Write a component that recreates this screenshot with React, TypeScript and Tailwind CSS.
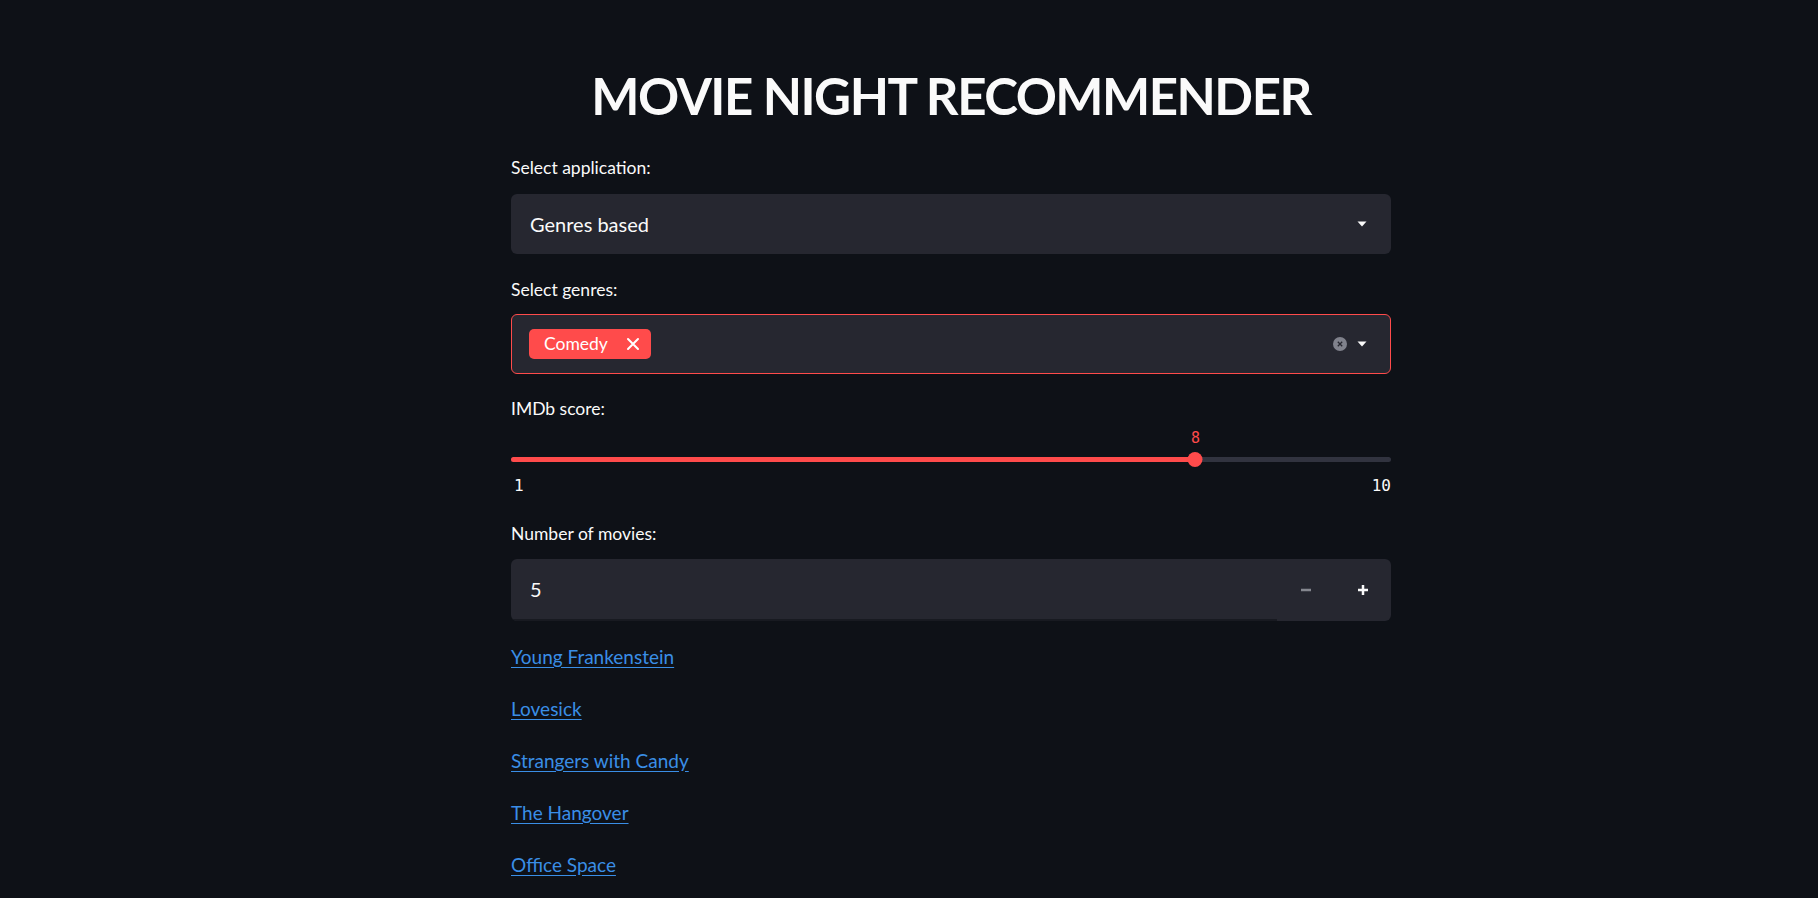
import React from 'react';

const movies = ['Young Frankenstein', 'Lovesick', 'Strangers with Candy', 'The Hangover', 'Office Space'];

const Caret = () => (
  <svg width="10" height="6" viewBox="0 0 10 6" className="shrink-0">
    <path d="M0.5 0.5 L9.5 0.5 L5 5.5 Z" fill="#fafafa" />
  </svg>
);

const Label = ({ children, className = '' }: { children: React.ReactNode; className?: string }) => (
  <div className={`h-[24px] flex items-center text-[17.5px] text-[#fafafa] ${className}`}>{children}</div>
);

export default function App() {
  const score = 8;
  const pct = ((score - 1) / 9) * 100;

  return (
    <div className="min-h-[898px] bg-[#0e1117] text-[#fafafa] font-['Lato','Noto_Sans',sans-serif]">
      <div className="ml-[511px] w-[880px] pt-[56px] flex flex-col">
        {/* title */}
        <h1 className="h-[80px] flex items-center justify-center text-[51px] font-bold tracking-[-1.5px]">
          MOVIE NIGHT RECOMMENDER
        </h1>

        {/* select application */}
        <Label className="mt-[20px]">Select application:</Label>
        <div className="mt-[14px] h-[60px] rounded-[6px] bg-[#262730] flex items-center pl-[19px] pr-[24px]">
          <span className="flex-1 text-[20px]">Genres based</span>
          <Caret />
        </div>

        {/* genres multiselect */}
        <Label className="mt-[24px]">Select genres:</Label>
        <div className="mt-[12px] h-[60px] rounded-[6px] bg-[#262730] border-[1.5px] border-[#ff4b4b] flex items-center pl-[17px] pr-[23px]">
          <div className="flex-1 flex items-center">
            <span className="h-[30px] rounded-[5px] bg-[#ff4b4b] flex items-center pl-[15px] pr-[11px] gap-[18px] text-[17.5px] text-white">
              Comedy
              <svg width="14" height="14" viewBox="0 0 14 14">
                <path d="M2 2 L12 12 M12 2 L2 12" stroke="#fff" strokeWidth="2" strokeLinecap="round" />
              </svg>
            </span>
          </div>
          <svg width="14" height="14" viewBox="0 0 14 14" className="mr-[10px]">
            <circle cx="7" cy="7" r="7" fill="#80828c" />
            <path d="M4.8 4.8 L9.2 9.2 M9.2 4.8 L4.8 9.2" stroke="#262730" strokeWidth="1.3" />
          </svg>
          <Caret />
        </div>

        {/* imdb slider */}
        <Label className="mt-[23px]">IMDb score:</Label>
        <div className="relative mt-[7px] h-[20px] font-['DejaVu_Sans_Mono',monospace] text-[15px] text-[#ff4b4b]">
          <span className="absolute -translate-x-1/2 leading-[20px]" style={{ left: `${pct}%` }}>
            {score}
          </span>
        </div>
        <div className="relative mt-[4px] h-[14px] flex items-center">
          <div className="w-full h-[5px] rounded-full bg-[#31333f]" />
          <div className="absolute left-0 h-[5px] rounded-full bg-[#ff4b4b]" style={{ width: `${pct}%` }} />
          <div
            className="absolute w-[15px] h-[15px] rounded-full bg-[#ff4b4b] -translate-x-1/2"
            style={{ left: `${pct}%` }}
          />
        </div>
        <div className="mt-[10px] h-[20px] flex justify-between items-center font-['DejaVu_Sans_Mono',monospace] text-[16px] text-[#fafafa]">
          <span className="pl-[3px]">1</span>
          <span>10</span>
        </div>

        {/* number of movies */}
        <Label className="mt-[26px]">Number of movies:</Label>
        <div className="mt-[13px] h-[62px] rounded-[6px] bg-[#262730] flex overflow-hidden">
          <div className="flex-1 flex items-center pl-[19px] text-[20px] border-b-[2px] border-[#181a21]">5</div>
          <button className="w-[57px] flex items-center justify-center">
            <svg width="12" height="12" viewBox="0 0 12 12">
              <path d="M1 6 H11" stroke="#85878f" strokeWidth="2.5" />
            </svg>
          </button>
          <button className="w-[57px] flex items-center justify-center">
            <svg width="12" height="12" viewBox="0 0 12 12">
              <path d="M1 6 H11 M6 1 V11" stroke="#fafafa" strokeWidth="2.5" />
            </svg>
          </button>
        </div>

        {/* results */}
        <div className="mt-[24px] flex flex-col gap-[28px]">
          {movies.map(m => (
            <a key={m} href="#" className="h-[24px] flex items-center text-[19px] text-[#3a8ee6] underline underline-offset-[3px] self-start">
              {m}
            </a>
          ))}
        </div>
      </div>
    </div>
  );
}
